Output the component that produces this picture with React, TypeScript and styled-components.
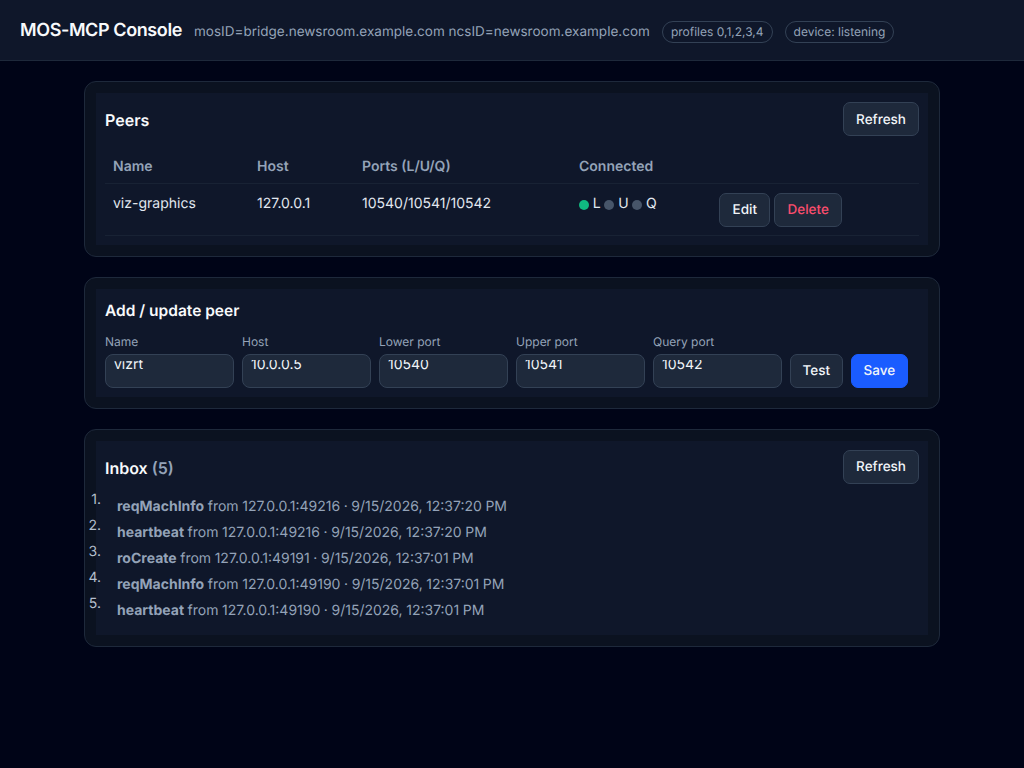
import React from "react";
import styled, { createGlobalStyle } from "styled-components";

const GlobalStyle = createGlobalStyle`
  html, body {
    margin: 0;
    min-height: 100%;
    background: #000417;
    color: #e2e8f0;
    font-family: Inter, "Liberation Sans", sans-serif;
    font-size: 14px;
    text-rendering: geometricPrecision;
  }
  * { box-sizing: border-box; }
`;

const Header = styled.header`
  display: flex;
  align-items: baseline;
  gap: 12px;
  height: 61px;
  padding: 20px 20px 0;
  background: #0f172a;
  border-bottom: 1px solid #1e293b;
`;

const AppTitle = styled.h1`
  margin: 0;
  font-size: 18px;
  font-weight: 600;
  line-height: 22px;
  letter-spacing: -0.4px;
  color: #f8fafc;
`;

const Meta = styled.span`
  font-size: 13.5px;
  letter-spacing: 0.015px;
  color: #94a3b8;
`;

const Pill = styled.span`
  display: inline-block;
  padding: 3px 8px;
  font-size: 12px;
  line-height: 14px;
  color: #94a3b8;
  border: 1px solid #334155;
  border-radius: 999px;
`;

const Main = styled.main`
  display: flex;
  flex-direction: column;
  gap: 20px;
  width: 856px;
  margin: 0 auto;
  padding-top: 20px;
`;

const Card = styled.section`
  padding: 11px;
  background: #0b1220;
  border: 1px solid #1e293b;
  border-radius: 12px;
`;

const Panel = styled.div`
  padding: 9px;
  background: #0f172a;
`;

const CardHead = styled.div`
  display: flex;
  align-items: flex-start;
  justify-content: space-between;
  height: 34px;
`;

const CardTitle = styled.h2`
  margin: 1px 0 0;
  font-size: 16px;
  font-weight: 600;
  line-height: 34px;
  color: #f8fafc;
`;

const FormTitle = styled(CardTitle)`
  margin: 0;
  font-size: 15.5px;
  line-height: 26px;
`;

const Muted = styled.span`
  color: #94a3b8;
  font-weight: 600;
`;

const Button = styled.button<{ $tone?: "danger" | "primary" }>`
  height: 34px;
  padding: 1px 12px 0;
  font: 500 13.5px Inter, "Liberation Sans", sans-serif;
  text-rendering: geometricPrecision;
  color: ${(p) => (p.$tone === "danger" ? "#fb4d6d" : "#f1f5f9")};
  background: ${(p) => (p.$tone === "primary" ? "#1a5cff" : "#1e293b")};
  border: 1px solid ${(p) => (p.$tone === "primary" ? "#1a5cff" : "#334155")};
  border-radius: 7px;
`;

const EditButton = styled(Button)`
  padding: 1px 12.5px 0;
`;

const TestButton = styled(Button)`
  padding: 1px 11.5px 0;
`;

const PeerTable = styled.table`
  width: 100%;
  margin-top: 13px;
  table-layout: fixed;
  border-collapse: collapse;
`;

const Th = styled.th<{ $w?: number }>`
  width: ${(p) => (p.$w ? `${p.$w}px` : "auto")};
  padding: 9px 8px 7px;
  height: 34px;
  font-size: 14px;
  font-weight: 600;
  line-height: 17px;
  text-align: left;
  color: #94a3b8;
  border-bottom: 1px solid #182234;
`;

const Td = styled.td`
  height: 52px;
  padding: 11px 8px 0;
  font-size: 14px;
  line-height: 17px;
  vertical-align: top;
  color: #e2e8f0;
  border-bottom: 1px solid #182234;
`;

const ActionTd = styled(Td)`
  padding-top: 9px;
`;

const Actions = styled.div`
  display: flex;
  gap: 4px;
`;

const Links = styled.div`
  display: flex;
  align-items: center;
  gap: 3.75px;
`;

const Dot = styled.i<{ $on?: boolean }>`
  display: block;
  width: 10px;
  height: 10px;
  margin-top: 3px;
  border-radius: 50%;
  background: ${(p) => (p.$on ? "#10b981" : "#475569")};
`;

const Form = styled.div`
  display: flex;
  align-items: flex-end;
  gap: 8px;
  margin-top: 10px;
`;

const Field = styled.label`
  display: flex;
  flex-direction: column;
  gap: 5px;
  width: 129px;
  font-size: 12px;
  line-height: 15px;
  color: #94a3b8;
`;

const InputBox = styled.div`
  height: 34px;
  padding-top: 5px;
  background: #1e293b;
  border: 1px solid #334155;
  border-radius: 8px;
`;

const Input = styled.input`
  display: block;
  width: 100%;
  height: 27px;
  padding: 0 8px 18px;
  font: 14px Inter, "Liberation Sans", sans-serif;
  text-rendering: geometricPrecision;
  color: #f1f5f9;
  background: transparent;
  border: 0;
  outline: 0;
`;

const Inbox = styled.ol`
  margin: 10px 0 2px;
  padding: 0;
  list-style: none;
  counter-reset: inbox;
`;

const InboxItem = styled.li`
  display: flex;
  height: 26px;
  align-items: center;
  color: #94a3b8;
  word-spacing: -0.35px;
  counter-increment: inbox;

  &::before {
    content: counter(inbox) ".";
    flex: none;
    width: 20px;
    margin: -14px 16px 0 -24px;
    text-align: right;
    color: #b4bfce;
  }
`;

const fields = [
  ["Name", "vizrt"],
  ["Host", "10.0.0.5"],
  ["Lower port", "10540"],
  ["Upper port", "10541"],
  ["Query port", "10542"],
];

const inbox = [
  ["reqMachInfo", "127.0.0.1:49216", "12:37:20 PM"],
  ["heartbeat", "127.0.0.1:49216", "12:37:20 PM"],
  ["roCreate", "127.0.0.1:49191", "12:37:01 PM"],
  ["reqMachInfo", "127.0.0.1:49190", "12:37:01 PM"],
  ["heartbeat", "127.0.0.1:49190", "12:37:01 PM"],
];

export default function App() {
  return (
    <>
      <GlobalStyle />
      <Header>
        <AppTitle>MOS-MCP Console</AppTitle>
        <Meta>mosID=bridge.newsroom.example.com ncsID=newsroom.example.com</Meta>
        <Pill>profiles 0,1,2,3,4</Pill>
        <Pill>device: listening</Pill>
      </Header>
      <Main>
        <Card>
          <Panel>
            <CardHead>
              <CardTitle>Peers</CardTitle>
              <Button>Refresh</Button>
            </CardHead>
            <PeerTable>
              <thead>
                <tr>
                  <Th $w={144}>Name</Th>
                  <Th $w={105}>Host</Th>
                  <Th $w={217}>Ports (L/U/Q)</Th>
                  <Th $w={140}>Connected</Th>
                  <Th />
                </tr>
              </thead>
              <tbody>
                <tr>
                  <Td>viz-graphics</Td>
                  <Td>127.0.0.1</Td>
                  <Td>10540/10541/10542</Td>
                  <Td>
                    <Links>
                      <Dot $on /> L <Dot /> U <Dot /> Q
                    </Links>
                  </Td>
                  <ActionTd>
                    <Actions>
                      <EditButton>Edit</EditButton>
                      <Button $tone="danger">Delete</Button>
                    </Actions>
                  </ActionTd>
                </tr>
              </tbody>
            </PeerTable>
          </Panel>
        </Card>
        <Card>
          <Panel>
            <FormTitle>Add / update peer</FormTitle>
            <Form>
              {fields.map(([label, value]) => (
                <Field key={label}>
                  {label}
                  <InputBox>
                    <Input defaultValue={value} />
                  </InputBox>
                </Field>
              ))}
              <TestButton>Test</TestButton>
              <Button $tone="primary">Save</Button>
            </Form>
          </Panel>
        </Card>
        <Card>
          <Panel>
            <CardHead>
              <CardTitle>
                Inbox <Muted>(5)</Muted>
              </CardTitle>
              <Button>Refresh</Button>
            </CardHead>
            <Inbox>
              {inbox.map(([type, from, time], i) => (
                <InboxItem key={i}>
                  <span>
                    <b>{type}</b> from {from} · 9/15/2026, {time}
                  </span>
                </InboxItem>
              ))}
            </Inbox>
          </Panel>
        </Card>
      </Main>
    </>
  );
}
